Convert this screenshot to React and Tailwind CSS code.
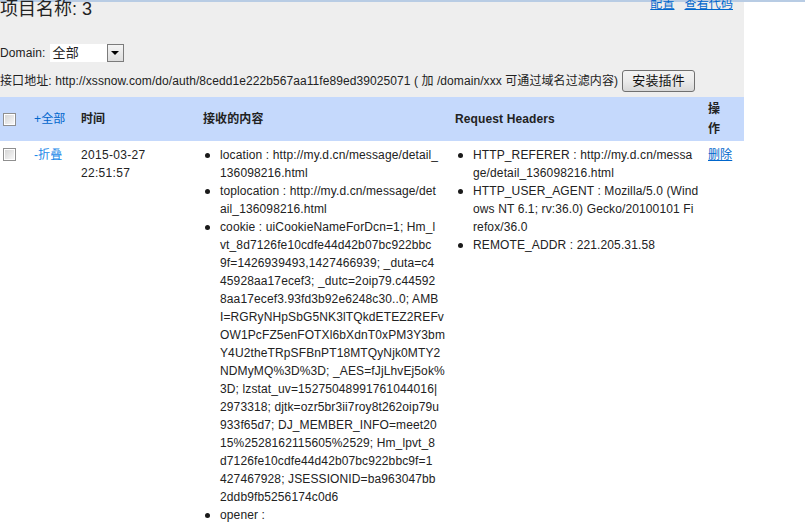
import React from 'react';

// lines as they wrap in the captured page
const content = [
  ['location : http://my.d.cn/message/detail_', '136098216.html'],
  ['toplocation : http://my.d.cn/message/det', 'ail_136098216.html'],
  [
    'cookie : uiCookieNameForDcn=1; Hm_l',
    'vt_8d7126fe10cdfe44d42b07bc922bbc',
    '9f=1426939493,1427466939; _duta=c4',
    '45928aa17ecef3; _dutc=2oip79.c44592',
    '8aa17ecef3.93fd3b92e6248c30..0; AMB',
    'I=RGRyNHpSbG5NK3lTQkdETEZ2REFv',
    'OW1PcFZ5enFOTXl6bXdnT0xPM3Y3bm',
    'Y4U2theTRpSFBnPT18MTQyNjk0MTY2',
    'NDMyMQ%3D%3D; _AES=fJjLhvEj5ok%',
    '3D; lzstat_uv=15275048991761044016|',
    '2973318; djtk=ozr5br3ii7roy8t262oip79u',
    '933f65d7; DJ_MEMBER_INFO=meet20',
    '15%2528162115605%2529; Hm_lpvt_8',
    'd7126fe10cdfe44d42b07bc922bbc9f=1',
    '427467928; JSESSIONID=ba963047bb',
    '2ddb9fb5256174c0d6',
  ],
  ['opener :'],
];

const headers = [
  ['HTTP_REFERER : http://my.d.cn/messa', 'ge/detail_136098216.html'],
  ['HTTP_USER_AGENT : Mozilla/5.0 (Wind', 'ows NT 6.1; rv:36.0) Gecko/20100101 Fi', 'refox/36.0'],
  ['REMOTE_ADDR : 221.205.31.58'],
];

function Checkbox() {
  return (
    <span className="block w-[13px] h-[13px] border border-[#8f8f8f] bg-white p-px">
      <span className="block w-full h-full bg-gradient-to-br from-[#d6d6d6] to-[#f7f7f7]" />
    </span>
  );
}

// bulleted list, each item given as its wrapped lines
function KvList({ items, className }) {
  return (
    <ul className={className}>
      {items.map((lines, i) => (
        <li key={i} className="relative whitespace-nowrap">
          <span className="absolute left-[-15px] top-[7px] w-[5px] h-[5px] rounded-full bg-[#1a1a1a]" />
          {lines.map((l, j) => (
            <div key={j}>{l}</div>
          ))}
        </li>
      ))}
    </ul>
  );
}

export default function App() {
  return (
    <div className="w-[805px] h-[524px] overflow-hidden bg-white text-[12px] leading-[18px] tracking-[0.12px] text-[#222] font-['Liberation_Sans','Noto_Sans_CJK_SC',sans-serif]">
      <div className="border-t-2 border-[#b8cce4]">
        <div className="w-[744px] h-[95px] bg-[#eeeeee]">
          <div className="flex justify-between h-[20px]">
            <h1 className="text-[18px] leading-[18px] -mt-[2px] font-normal tracking-normal">项目名称: 3</h1>
            <div className="flex gap-[10px] pr-[11px] -mt-[5px] leading-[14px] text-[12px]">
              <a className="text-[#0066cc] underline">配置</a>
              <a className="text-[#0066cc] underline">查看代码</a>
            </div>
          </div>
          <div className="flex items-center mt-[22px] h-[18px]">
            <span>Domain:</span>
            <div className="ml-[4px] flex h-[18px] w-[74px] bg-white">
              <span className="flex-1 pl-[3px] text-[13px] leading-[18px]">全部</span>
              <span className="w-[17px] h-[18px] border border-[#7b7b7b] bg-gradient-to-b from-[#f4f4f4] to-[#dedede] flex items-center justify-center">
                <span className="w-0 h-0 border-l-[4px] border-r-[4px] border-t-[4px] border-l-transparent border-r-transparent border-t-black" />
              </span>
            </div>
          </div>
          <div className="flex items-center mt-[8px] h-[22px]">
            <span className="tracking-[0.08px]">
              接口地址: http://xssnow.com/do/auth/8cedd1e222b567aa11fe89ed39025071 ( 加 /domain/xxx 可通过域名过滤内容)
            </span>
            <button className="ml-[4px] w-[73px] h-[22px] border border-[#707070] rounded-[3px] bg-gradient-to-b from-[#f3f3f3] via-[#ebebeb] to-[#d8d8d8] text-[13px] text-[#111]">
              安装插件
            </button>
          </div>
        </div>
      </div>
      <table className="w-[744px] border-collapse table-fixed">
        <colgroup>
          <col className="w-[31px]" />
          <col className="w-[47px]" />
          <col className="w-[122px]" />
          <col className="w-[252px]" />
          <col className="w-[253px]" />
          <col className="w-[39px]" />
        </colgroup>
        <thead>
          <tr className="bg-[#c5d9fc] h-[44px] text-left">
            <th className="pl-[3px]"><Checkbox /></th>
            <th className="pl-[3px] font-normal text-[#0066cc]">+全部</th>
            <th className="pl-[3px] font-bold">时间</th>
            <th className="pl-[3px] font-bold">接收的内容</th>
            <th className="pl-[3px] font-bold">Request Headers</th>
            <th className="pl-[3px] pr-[18px] font-bold leading-[20px] break-all">操作</th>
          </tr>
        </thead>
        <tbody>
          <tr className="align-top">
            <td className="pl-[3px] pt-[7px]"><Checkbox /></td>
            <td className="pl-[3px] pt-[5px] text-[#1a88e8]">-折叠</td>
            <td className="pl-[3px] pt-[5px] tracking-[0.3px]">
              2015-03-27
              <br />
              22:51:57
            </td>
            <td className="pl-[3px] pt-[5px]">
              <KvList items={content} className="pl-[17px]" />
            </td>
            <td className="pl-[3px] pt-[5px]">
              <KvList items={headers} className="pl-[18px]" />
            </td>
            <td className="pl-[3px] pt-[5px]">
              <a className="text-[#0066cc] underline">删除</a>
            </td>
          </tr>
        </tbody>
      </table>
    </div>
  );
}
